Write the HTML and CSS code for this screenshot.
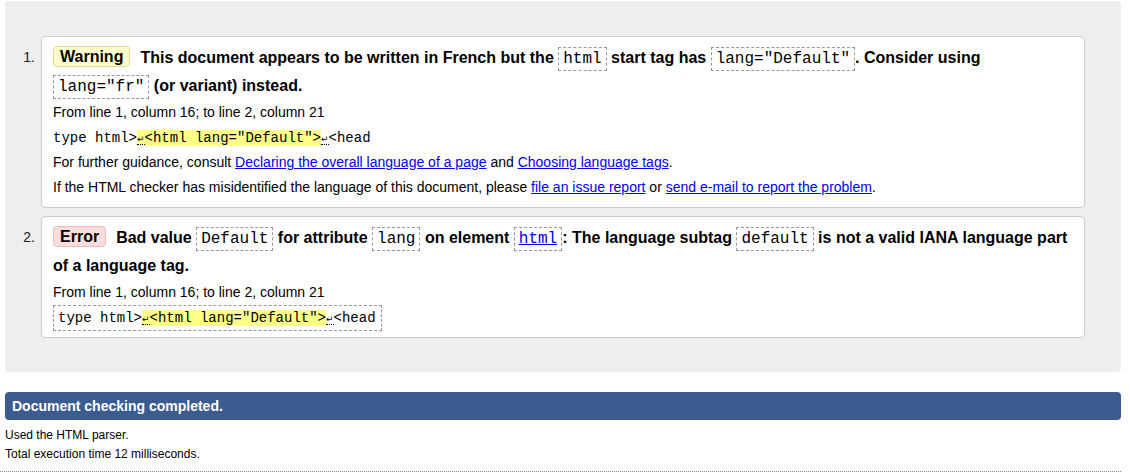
FILE: index.html
```html
<!DOCTYPE html>
<html lang="en">
<head>
<meta charset="utf-8">
<link rel="stylesheet" href="styles.css">
</head>
<body>
<div class="results">
  <ol class="messages">
    <li class="item">
      <span class="num">1.</span>
      <div class="card">
        <p class="head"><strong class="badge warn">Warning</strong><span class="msg">This document appears to be written in French but the <code class="tag">html</code> start tag has <code class="tag">lang="Default"</code>. Consider using <code class="tag">lang="fr"</code> (or variant) instead.</span></p>
        <p class="loc">From line 1, column 16; to line 2, column 21</p>
        <p class="extract"><code>type html&gt;<span class="hl"><span class="lf">↵</span>&lt;html lang="Default"&gt;</span><span class="lf">↵</span>&lt;head</code></p>
        <p class="info">For further guidance, consult <a href="#">Declaring the overall language of a page</a> and <a href="#">Choosing language tags</a>.</p>
        <p class="info">If the HTML checker has misidentified the language of this document, please <a href="#">file an issue report</a> or <a href="#">send e-mail to report the problem</a>.</p>
      </div>
    </li>
    <li class="item">
      <span class="num">2.</span>
      <div class="card">
        <p class="head"><strong class="badge err">Error</strong><span class="msg">Bad value <code class="tag">Default</code> for attribute <code class="tag">lang</code> on element <code class="tag"><a href="#">html</a></code>: The language subtag <code class="tag">default</code> is not a valid IANA language part of a language tag.</span></p>
        <p class="loc">From line 1, column 16; to line 2, column 21</p>
        <p class="extract"><code class="boxed">type html&gt;<span class="hl"><span class="lf">↵</span>&lt;html lang="Default"&gt;</span><span class="lf">↵</span>&lt;head</code></p>
      </div>
    </li>
  </ol>
</div>
<div class="done">Document checking completed.</div>
<p class="meta first">Used the HTML parser.</p>
<p class="meta">Total execution time 12 milliseconds.</p>
<div class="rule"></div>
</body>
</html>
```
FILE: styles.css
```css
html, body {
  margin: 0;
  padding: 0;
  background: #fff;
  color: #000;
  font-family: "Liberation Sans", Arial, Helvetica, sans-serif;
}
body {
  padding: 1px 9px 0 5px;
}
p { margin: 0; }
a { color: #00e; text-decoration: underline; }

.results {
  background: #eee;
  border-radius: 4px;
  padding: 35px 36px 34px 0;
}
.messages {
  list-style: none;
  margin: 0;
  padding: 0;
  display: flex;
  flex-direction: column;
  gap: 8px;
}
.item {
  display: flex;
  align-items: flex-start;
}
.num {
  width: 30px;
  padding-right: 6px;
  text-align: right;
  font-size: 14px;
  line-height: 28px;
  margin-top: 7px;
  color: #222;
}
.card {
  flex: 1;
  background: #fff;
  border: 1px solid #ccc;
  border-radius: 4px;
  padding: 7px 11px 7px 11px;
}
.head {
  font-size: 16px;
  font-weight: bold;
  line-height: 28px;
}
.badge {
  display: inline-block;
  border: 1px solid;
  border-radius: 4px;
  padding: 0 6px;
  line-height: 19px;
  vertical-align: 1px;
  margin-right: 10px;
}
.badge.warn { background: #ffc; border-color: #dddd99; }
.badge.err { background: #fdd; border-color: #eebbbb; }
.tag {
  font-family: "Liberation Mono", "Courier New", monospace;
  font-weight: normal;
  font-size: 16px;
  line-height: 1;
  border: 1px dashed #999;
  padding: 2px 4px;
}
.loc, .info, .extract {
  font-size: 14px;
  line-height: 25px;
}
.extract code {
  font-family: "Liberation Mono", "Courier New", monospace;
  font-size: 14px;
  line-height: 1;
}
.extract code.boxed {
  border: 1px dashed #999;
  padding: 4px 5px 4px 4px;
}
.hl { background: #ffff88; }
.lf {
  font-family: "DejaVu Sans", sans-serif;
  font-size: 9px;
  border-bottom: 1px dotted #000;
}

.done {
  margin-top: 20px;
  background: #3c5b8f;
  color: #fff;
  font-weight: bold;
  font-size: 14px;
  line-height: 28px;
  padding: 0 7px;
  border-radius: 4px;
}
.meta {
  font-size: 12px;
  line-height: 19px;
}
.meta.first { margin-top: 6px; }
.rule {
  margin: 7px -9px 0 -5px;
  width: 1121px;
  border-top: 1px dotted #888;
}
```
